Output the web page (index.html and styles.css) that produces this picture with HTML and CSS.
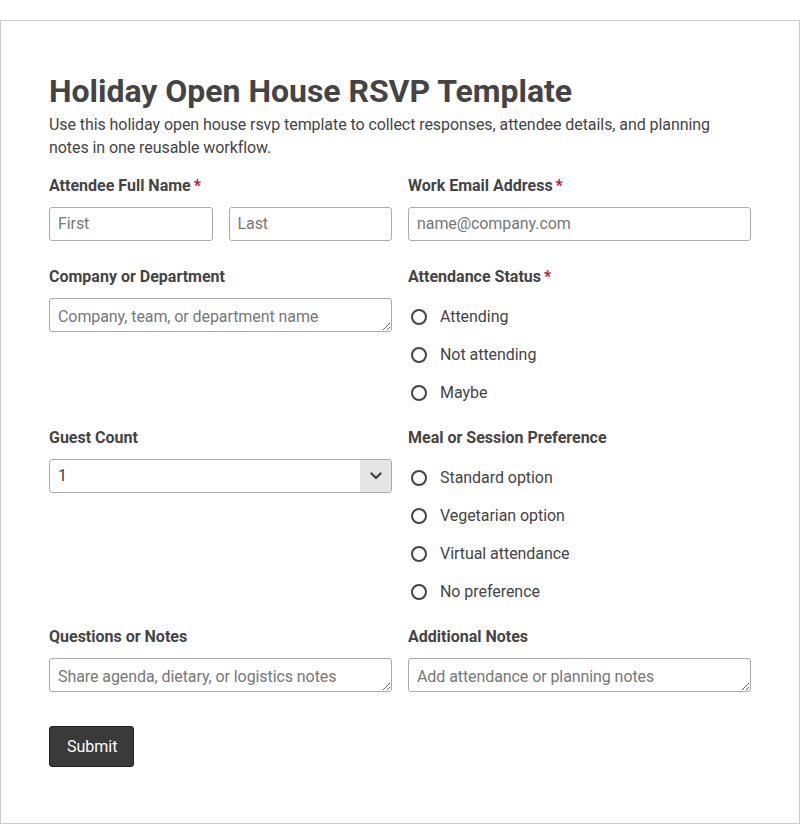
FILE: index.html
```html
<!DOCTYPE html>
<html lang="en">
<head>
<meta charset="utf-8">
<title>Holiday Open House RSVP Template</title>
<link rel="stylesheet" href="styles.css">
</head>
<body>
<div class="card">
  <h1 class="title">Holiday Open House RSVP Template</h1>
  <p class="desc">Use this holiday open house rsvp template to collect responses, attendee details, and planning notes in one reusable workflow.</p>
  <form class="form">
    <div class="grid">
      <div class="field">
        <label class="label">Attendee Full Name<span class="req">*</span></label>
        <div class="name-row">
          <input class="input" type="text" placeholder="First">
          <input class="input" type="text" placeholder="Last">
        </div>
      </div>
      <div class="field">
        <label class="label">Work Email Address<span class="req">*</span></label>
        <input class="input" type="email" placeholder="name@company.com">
      </div>
      <div class="field">
        <label class="label">Company or Department</label>
        <textarea class="input area" rows="1" placeholder="Company, team, or department name"></textarea>
      </div>
      <div class="field">
        <label class="label">Attendance Status<span class="req">*</span></label>
        <div class="radios">
          <label class="option"><input class="radio" type="radio" name="att"><span>Attending</span></label>
          <label class="option"><input class="radio" type="radio" name="att"><span>Not attending</span></label>
          <label class="option"><input class="radio" type="radio" name="att"><span>Maybe</span></label>
        </div>
      </div>
      <div class="field">
        <label class="label">Guest Count</label>
        <div class="select-wrap">
          <select class="input select">
            <option>1</option>
            <option>2</option>
            <option>3</option>
            <option>4</option>
          </select>
          <span class="select-arrow"><svg width="12" height="8" viewBox="0 0 12 8"><path d="M1.5 1.5 L6 6 L10.5 1.5" fill="none" stroke="#444" stroke-width="2.4" stroke-linecap="round" stroke-linejoin="round"/></svg></span>
        </div>
      </div>
      <div class="field">
        <label class="label">Meal or Session Preference</label>
        <div class="radios">
          <label class="option"><input class="radio" type="radio" name="meal"><span>Standard option</span></label>
          <label class="option"><input class="radio" type="radio" name="meal"><span>Vegetarian option</span></label>
          <label class="option"><input class="radio" type="radio" name="meal"><span>Virtual attendance</span></label>
          <label class="option"><input class="radio" type="radio" name="meal"><span>No preference</span></label>
        </div>
      </div>
      <div class="field">
        <label class="label">Questions or Notes</label>
        <textarea class="input area" rows="1" placeholder="Share agenda, dietary, or logistics notes"></textarea>
      </div>
      <div class="field">
        <label class="label">Additional Notes</label>
        <textarea class="input area" rows="1" placeholder="Add attendance or planning notes"></textarea>
      </div>
    </div>
    <button class="submit" type="button">Submit</button>
  </form>
</div>
</body>
</html>
```
FILE: styles.css
```css
* { box-sizing: border-box; }
html, body { margin: 0; padding: 0; background: #fff; }
body {
  padding-top: 20px;
  font-family: Roboto, "Liberation Sans", Arial, sans-serif;
  color: #444;
}
.card {
  border: 1px solid #ccc;
  padding: 48px 48px 56px;
}
.title {
  margin: 3px 0 3px;
  font-size: 32px;
  line-height: 38px;
  font-weight: 700;
  color: #444;
  letter-spacing: -0.03px;
}
.desc {
  margin: 0 0 15px;
  font-size: 16px;
  line-height: 23px;
  color: #444;
  letter-spacing: -0.07px;
}
.form { margin: 0; }
.grid {
  display: grid;
  grid-template-columns: 1fr 1fr;
  column-gap: 16px;
  row-gap: 24px;
}
.field { min-width: 0; }
.label {
  display: block;
  margin-bottom: 10px;
  font-size: 16px;
  line-height: 23px;
  font-weight: 700;
  color: #444;
}
.req { color: #c8102e; margin-left: 3px; }
.name-row {
  display: grid;
  grid-template-columns: 1fr 1fr;
  column-gap: 16px;
}
.input {
  display: block;
  width: 100%;
  height: 34px;
  margin: 0;
  padding: 5px 8px 7px;
  border: 1px solid #aaa;
  border-radius: 3px;
  font-family: Roboto, "Liberation Sans", Arial, sans-serif;
  font-size: 16px;
  line-height: 20px;
  color: #444;
  background: #fff;
  outline: none;
  letter-spacing: -0.08px;
}
.input::placeholder { color: #777; opacity: 1; }
.area { resize: vertical; overflow: hidden; padding: 8px 8px 4px; }
.select-wrap { position: relative; }
.select {
  appearance: none;
  -webkit-appearance: none;
  padding: 6px 40px 6px 8px;
}
.select-arrow {
  position: absolute;
  top: 1px;
  right: 1px;
  bottom: 1px;
  width: 31px;
  background: #e6e6e6;
  border-radius: 0 2px 2px 0;
  display: flex;
  align-items: center;
  justify-content: center;
  pointer-events: none;
}
.radios {
  display: flex;
  flex-direction: column;
  gap: 18px;
  padding-top: 9px;
  margin-bottom: -1px;
}
.option {
  display: flex;
  align-items: center;
  height: 20px;
  font-size: 16px;
  line-height: 20px;
  color: #444;
  letter-spacing: -0.05px;
}
.radio {
  appearance: none;
  -webkit-appearance: none;
  width: 16px;
  height: 16px;
  margin: 0 13px 0 3px;
  border: 2px solid #444;
  border-radius: 50%;
  background: #fff;
  flex: none;
}
.submit {
  display: block;
  margin-top: 34px;
  padding: 8px 16px 8px 17px;
  border: 1px solid #222;
  border-radius: 3px;
  background: #3a3a3a;
  color: #fff;
  font-family: Roboto, "Liberation Sans", Arial, sans-serif;
  font-size: 16px;
  line-height: 23px;
}
```
